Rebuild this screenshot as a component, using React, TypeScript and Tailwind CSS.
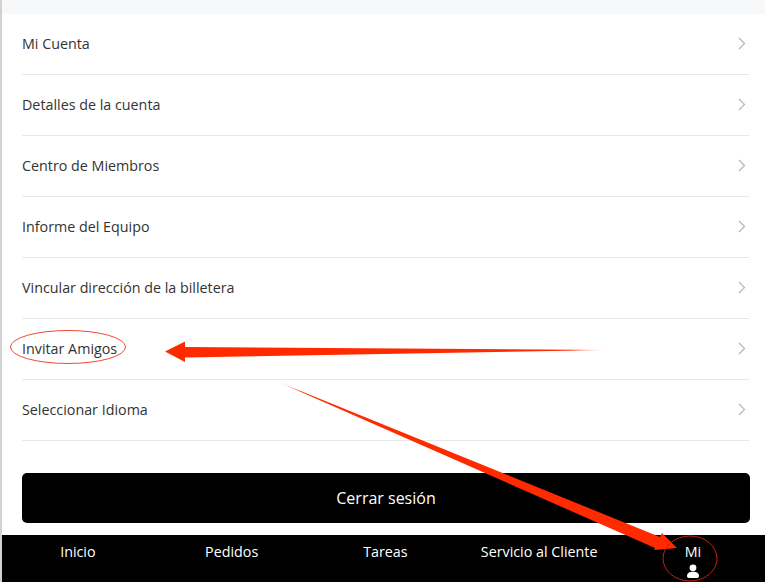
const menuItems = [
  "Mi Cuenta",
  "Detalles de la cuenta",
  "Centro de Miembros",
  "Informe del Equipo",
  "Vincular dirección de la billetera",
  "Invitar Amigos",
  "Seleccionar Idioma",
];

const navItems = ["Inicio", "Pedidos", "Tareas", "Servicio al Cliente", "Mi"];

function Chevron() {
  return (
    <svg width="8" height="13" viewBox="0 0 8 13" fill="none" className="shrink-0">
      <path d="M1 1l5.5 5.5L1 12" stroke="#b5b5b5" strokeWidth="1.2" />
    </svg>
  );
}

function Annotations() {
  return (
    <svg width="765" height="582" viewBox="0 0 765 582" className="absolute left-0 top-0 pointer-events-none">
      <defs>
        <linearGradient id="fadeLeft" gradientUnits="userSpaceOnUse" x1="608" y1="350" x2="572" y2="351">
          <stop offset="0" stopColor="#ff2a00" stopOpacity="0" />
          <stop offset="1" stopColor="#ff2a00" />
        </linearGradient>
        <linearGradient id="fadeDiag" gradientUnits="userSpaceOnUse" x1="276" y1="381" x2="302" y2="392">
          <stop offset="0" stopColor="#ff2a00" stopOpacity="0" />
          <stop offset="1" stopColor="#ff2a00" />
        </linearGradient>
      </defs>
      <ellipse cx="68" cy="347" rx="57.5" ry="16.5" fill="none" stroke="#f04a35" strokeWidth="1" />
      <path d="M165 351.5L185 341.5V347L608 350L185 357.5V362Z" fill="url(#fadeLeft)" />
      <path d="M276 381L660 537L662 533L677 548L654 550L655 548Z" fill="url(#fadeDiag)" />
      <ellipse cx="690" cy="558.5" rx="27" ry="22.5" fill="none" stroke="#c9200e" strokeWidth="1" />
    </svg>
  );
}

export default function App() {
  return (
    <div className="relative w-[765px] h-[582px] overflow-hidden bg-white border-l-2 border-[#d2d2d2] font-['Open_Sans','Noto_Sans',sans-serif] text-[14.3px] text-[#333333]">
      <div className="h-[14px] bg-[#f6f8fa]" />
      <ul className="pl-5 pr-[16px]">
        {menuItems.map((item) => (
          <li key={item} className="flex h-[61px] items-center justify-between border-b border-[#e8e8e8] pb-[1px] pr-[3px]">
            <span>{item}</span>
            <Chevron />
          </li>
        ))}
      </ul>
      <div className="pl-5 pr-[15px] pt-[32px]">
        <button className="h-[50px] w-full rounded-[5px] bg-black text-[16px] text-white">Cerrar sesión</button>
      </div>
      <nav className="ml-[-1px] mt-[12px] flex h-[47px] bg-black text-white">
        {navItems.map((item) => (
          <div key={item} className="flex w-[153.75px] shrink-0 flex-col items-center pt-[7px] leading-[20px]">
            <span>{item}</span>
            {item === "Mi" && (
              <svg width="14" height="14" viewBox="0 0 14 14" className="mt-[2px]" fill="#ffffff">
                <circle cx="7" cy="3.8" r="3.4" />
                <path d="M1 12c0-2.8 2.4-4.2 6-4.2s6 1.4 6 4.2c0 1.2-.8 2-2 2H3c-1.200 0-2-.8-2-2z" />
              </svg>
            )}
          </div>
        ))}
      </nav>
      <div className="absolute left-[-2px] top-0">
        <Annotations />
      </div>
    </div>
  );
}
